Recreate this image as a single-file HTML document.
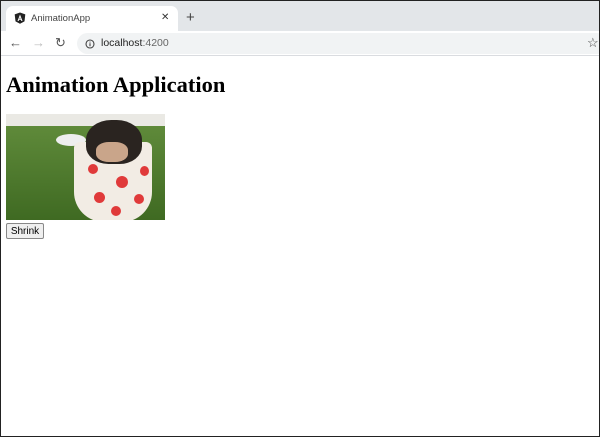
<!DOCTYPE html>
<html><head><style>
*{margin:0;padding:0;box-sizing:border-box}
body{width:600px;height:437px;background:#fff;position:relative;overflow:hidden;font-family:"Liberation Sans",sans-serif}
.frame{position:absolute;inset:0;border:1px solid #222;z-index:10;pointer-events:none}
.tabbar{position:absolute;left:0;top:0;width:600px;height:31px;background:#e3e6e9}
.tab{position:absolute;left:6px;top:6px;width:172px;height:25px;background:#fff;border-radius:7px 7px 0 0}
.tab .t{position:absolute;left:25px;top:7px;font-size:9.5px;color:#444}
.tab .x{position:absolute;left:155px;top:6px;font-size:10px;color:#333}
.plus{position:absolute;left:186px;top:9px;font-size:15px;color:#444}
.tool{position:absolute;left:0;top:31px;width:600px;height:25px;background:#fff;border-bottom:1px solid #dadce0}
.addr{position:absolute;left:77px;top:2px;width:530px;height:21px;background:#f1f3f4;border-radius:11px}
.addr .u{position:absolute;left:24px;top:4px;font-size:10.5px;color:#222}
.addr .u span{color:#666}
.ic{position:absolute;font-size:13px;color:#555}
h1{position:absolute;left:6px;top:72px;font-family:"Liberation Serif",serif;font-size:22.5px;font-weight:bold;color:#000}
.img{position:absolute;left:6px;top:114px;width:159px;height:106px;overflow:hidden;background:#4a7a2a}
button{position:absolute;left:6px;top:223px;width:38px;height:16px;font-size:10px;font-family:"Liberation Sans",sans-serif;background:#efefef;border:1px solid #888;border-radius:2px}
</style></head><body>
<div class="tabbar">
 <div class="tab">
  <svg style="position:absolute;left:8px;top:6px" width="12" height="12" viewBox="0 0 12 12"><path d="M6 0.5L11.3 2.4 10.5 9.4 6 11.8 1.5 9.4 0.7 2.4Z" fill="#222"/><path d="M6 2.5L3.5 9h1.1l.5-1.3h1.8l.5 1.3h1.1ZM5.4 6.8L6 5.2 6.6 6.8Z" fill="#fff"/></svg>
  <div class="t">AnimationApp</div><div class="x">✕</div>
 </div>
 <div class="plus">+</div>
</div>
<div class="tool">
 <div class="ic" style="left:9px;top:4px">←</div>
 <div class="ic" style="left:32px;top:4px;color:#bbb">→</div>
 <div class="ic" style="left:55px;top:4px">↻</div>
 <div class="addr">
  <svg style="position:absolute;left:8px;top:6px" width="10" height="10" viewBox="0 0 10 10"><circle cx="5" cy="5" r="4" fill="none" stroke="#444" stroke-width="1.1"/><path d="M5 4.3v3M5 2.6v.9" stroke="#444" stroke-width="1.1"/></svg>
  <div class="u">localhost<span>:4200</span></div>
  <div style="position:absolute;left:510px;top:2px;font-size:13px;color:#444">☆</div>
 </div>
</div>
<h1>Animation Application</h1>
<div class="img">
 <div style="position:absolute;left:0;top:0;width:159px;height:18px;background:#eae9e4"></div>
 <div style="position:absolute;left:0;top:12px;width:159px;height:94px;background:linear-gradient(#5f8a3a,#3f6a22)"></div>
 <div style="position:absolute;left:50px;top:20px;width:30px;height:12px;border-radius:50%;background:#eee"></div>
 <div style="position:absolute;left:68px;top:28px;width:78px;height:80px;background:#f2ece4;border-radius:6px 6px 30px 30px"></div>
 <div style="position:absolute;left:80px;top:6px;width:56px;height:44px;background:#2a2420;border-radius:45% 45% 40% 40%"></div>
 <div style="position:absolute;left:90px;top:28px;width:32px;height:20px;background:#c9a58a;border-radius:40%"></div>
 <div style="position:absolute;left:82px;top:50px;width:10px;height:10px;border-radius:50%;background:#e03a3a"></div>
 <div style="position:absolute;left:110px;top:62px;width:12px;height:12px;border-radius:50%;background:#e03a3a"></div>
 <div style="position:absolute;left:88px;top:78px;width:11px;height:11px;border-radius:50%;background:#e03a3a"></div>
 <div style="position:absolute;left:128px;top:80px;width:10px;height:10px;border-radius:50%;background:#e03a3a"></div>
 <div style="position:absolute;left:105px;top:92px;width:10px;height:10px;border-radius:50%;background:#e03a3a"></div>
 <div style="position:absolute;left:134px;top:52px;width:9px;height:10px;border-radius:50%;background:#e03a3a"></div>
</div>
<button>Shrink</button>
<div class="frame"></div>
</body></html>
